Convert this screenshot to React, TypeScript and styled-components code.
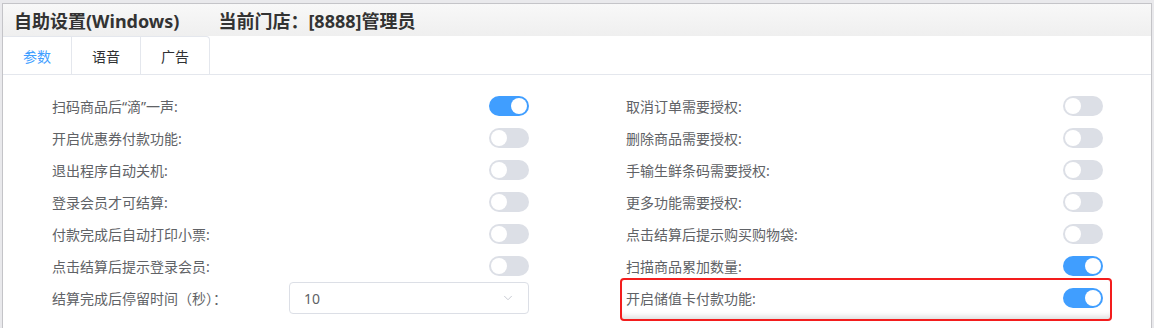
import React from 'react'
import styled, { createGlobalStyle } from 'styled-components'
import { ChevronDown } from 'lucide-react'

const GlobalStyle = createGlobalStyle`
  html, body {
    margin: 0;
    padding: 0;
    background: #e9e9ec;
    font-family: "Noto Sans", "Noto Sans CJK SC", sans-serif;
  }
  body {
    padding: 3px 2px 0 2px;
  }
`

const Panel = styled.div`
  height: 330px;
  background: #fff;
  border: 1px solid #c4c4c8;
  border-bottom: none;
  box-sizing: border-box;
  overflow: hidden;
`

const Header = styled.div`
  height: 32px;
  display: flex;
  align-items: center;
  gap: 39px;
  padding-left: 11px;
  background: linear-gradient(to bottom, #f8f8f8, #efefef);
  font-size: 18px;
  font-weight: 700;
  color: #333;
`

const TabBar = styled.div`
  display: flex;
  height: 38px;
  border-bottom: 1px solid #e4e7ed;
`

const Tab = styled.div<{ active?: boolean; last?: boolean }>`
  width: 69px;
  display: flex;
  align-items: center;
  justify-content: center;
  border-top: 1px solid #e4e7ed;
  border-right: 1px solid #e4e7ed;
  border-top-right-radius: ${p => (p.last ? '4px' : '0')};
  font-size: 14px;
  color: ${p => (p.active ? '#409eff' : '#303133')};
  box-sizing: border-box;
`

const Form = styled.div`
  display: grid;
  grid-template-columns: 1fr 1fr;
  padding-top: 15px;
`

const Column = styled.div`
  padding: 0 48px 0 49px;
`

const Row = styled.div`
  position: relative;
  height: 32px;
  display: flex;
  align-items: center;
  justify-content: space-between;
`

const Label = styled.span`
  font-size: 14px;
  color: #606266;
`

const Track = styled.span<{ on: boolean }>`
  position: relative;
  width: 40px;
  height: 20px;
  border-radius: 10px;
  background: ${p => (p.on ? '#409eff' : '#dcdfe6')};
  &::after {
    content: '';
    position: absolute;
    top: 2px;
    left: ${p => (p.on ? '22px' : '2px')};
    width: 16px;
    height: 16px;
    border-radius: 50%;
    background: #fff;
  }
`

const Select = styled.div`
  width: 240px;
  height: 32px;
  box-sizing: border-box;
  border: 1px solid #dcdfe6;
  border-radius: 4px;
  display: flex;
  align-items: center;
  justify-content: space-between;
  padding: 0 13px 0 14px;
  font-size: 14px;
  color: #606266;
`

const Highlight = styled.div`
  position: absolute;
  inset: -4px -9px -7px -6px;
  border: 2.5px solid #f31d1d;
  border-radius: 4px;
  box-shadow: inset 0 -6px 5px -3px rgba(0, 0, 0, 0.12);
  pointer-events: none;
`

type Item = { label: string; on?: boolean; select?: string; marked?: boolean }

const left: Item[] = [
  { label: '扫码商品后“滴”一声:', on: true },
  { label: '开启优惠券付款功能:' },
  { label: '退出程序自动关机:' },
  { label: '登录会员才可结算:' },
  { label: '付款完成后自动打印小票:' },
  { label: '点击结算后提示登录会员:' },
  { label: '结算完成后停留时间（秒）：', select: '10' },
]

const right: Item[] = [
  { label: '取消订单需要授权:' },
  { label: '删除商品需要授权:' },
  { label: '手输生鲜条码需要授权:' },
  { label: '更多功能需要授权:' },
  { label: '点击结算后提示购买购物袋:' },
  { label: '扫描商品累加数量:', on: true },
  { label: '开启储值卡付款功能:', on: true, marked: true },
]

const FormRow: React.FC<{ item: Item }> = ({ item }) => (
  <Row>
    <Label>{item.label}</Label>
    {item.select ? (
      <Select>
        <span>{item.select}</span>
        <ChevronDown size={14} color="#c0c4cc" strokeWidth={1.5} />
      </Select>
    ) : (
      <Track on={!!item.on} />
    )}
    {item.marked && <Highlight />}
  </Row>
)

const App: React.FC = () => (
  <>
    <GlobalStyle />
    <Panel>
      <Header>
        <span>自助设置(Windows)</span>
        <span>当前门店：[8888]管理员</span>
      </Header>
      <TabBar>
        <Tab active>参数</Tab>
        <Tab>语音</Tab>
        <Tab last>广告</Tab>
      </TabBar>
      <Form>
        <Column>
          {left.map(item => <FormRow key={item.label} item={item} />)}
        </Column>
        <Column>
          {right.map(item => <FormRow key={item.label} item={item} />)}
        </Column>
      </Form>
    </Panel>
  </>
)

export default App
